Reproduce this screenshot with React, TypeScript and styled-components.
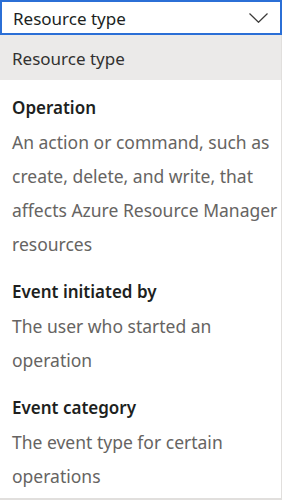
import styled, { createGlobalStyle } from 'styled-components';

const GlobalStyle = createGlobalStyle`
  html, body {
    margin: 0;
    padding: 0;
    background: #ffffff;
  }
  body {
    font-family: "Noto Sans", "Open Sans", Arial, sans-serif;
  }
`;

type Option = {
  title: string;
  description?: string;
};

const options: Option[] = [
  { title: 'Resource type' },
  {
    title: 'Operation',
    description:
      'An action or command, such as create, delete, and write, that affects Azure Resource Manager resources',
  },
  {
    title: 'Event initiated by',
    description: 'The user who started an operation',
  },
  {
    title: 'Event category',
    description: 'The event type for certain operations',
  },
];

const Wrapper = styled.div`
  width: 282px;
  display: flex;
  flex-direction: column;
`;

const Select = styled.div`
  box-sizing: border-box;
  height: 35px;
  display: flex;
  align-items: center;
  justify-content: space-between;
  padding: 1px 12px 0 11px;
  border: 2px solid #2b6fd6;
  color: #201f1e;
  font-size: 17px;
`;

const Menu = styled.div`
  box-sizing: border-box;
  height: 465px;
  border-right: 1px solid #e1dfdd;
  border-bottom: 2px solid #e1dfdd;
  background: #ffffff;
`;

const Item = styled.div<{ $selected?: boolean }>`
  padding: ${({ $selected }) => ($selected ? '2px 2px 0 12px' : '11px 2px 3px 12px')};
  background: ${({ $selected }) => ($selected ? '#ebeae9' : 'transparent')};
  min-height: ${({ $selected }) => ($selected ? '45px' : '0')};
  box-sizing: border-box;
  display: flex;
  flex-direction: column;
  justify-content: center;
`;

const Title = styled.div<{ $plain?: boolean }>`
  font-size: 17px;
  line-height: 34px;
  font-weight: ${({ $plain }) => ($plain ? 400 : 600)};
  color: ${({ $plain }) => ($plain ? '#323130' : '#201f1e')};
`;

const Description = styled.div`
  font-size: 17.5px;
  line-height: 34px;
  color: #666462;
`;

const Chevron = () => (
  <svg width="19" height="10" viewBox="0 0 19 10" fill="none">
    <path d="M0.5 0.5 L9.5 9.3 L18.5 0.5" stroke="#3b3a39" strokeWidth="1.2" />
  </svg>
);

export default function App() {
  return (
    <>
      <GlobalStyle />
      <Wrapper>
        <Select>
          <span>Resource type</span>
          <Chevron />
        </Select>
        <Menu>
          {options.map((opt, i) => (
            <Item key={opt.title} $selected={i === 0}>
              <Title $plain={!opt.description}>{opt.title}</Title>
              {opt.description && <Description>{opt.description}</Description>}
            </Item>
          ))}
        </Menu>
      </Wrapper>
    </>
  );
}
